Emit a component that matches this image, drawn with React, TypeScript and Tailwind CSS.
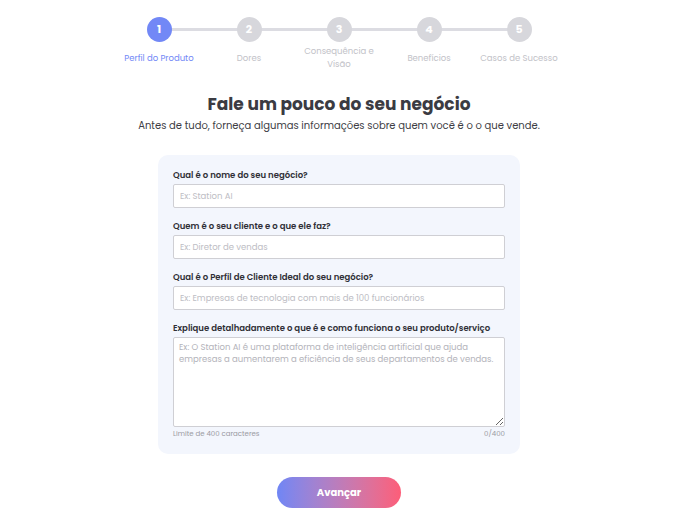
import { useState } from 'react';

const STEPS = [
  { n: 1, label: 'Perfil do Produto' },
  { n: 2, label: 'Dores' },
  { n: 3, label: 'Consequência e Visão' },
  { n: 4, label: 'Benefícios' },
  { n: 5, label: 'Casos de Sucesso' },
];

const font = { fontFamily: 'Poppins, "DejaVu Sans", Inter, sans-serif' };

function Stepper({ current }: { current: number }) {
  return (
    <div className="relative flex justify-center pt-[17px]">
      {/* connecting line */}
      <div className="absolute left-1/2 top-[28px] h-[3px] w-[360px] -translate-x-1/2 bg-[#dcdce2]" />
      {STEPS.map((s) => {
        const active = s.n === current;
        return (
          <div key={s.n} className="relative flex w-[90px] flex-col items-center">
            <div
              className={
                'flex h-[25px] w-[25px] items-center justify-center rounded-full text-[11px] font-bold text-white ' +
                (active ? 'bg-[#7288f6]' : 'bg-[#d7d7dc]')
              }
            >
              {s.n}
            </div>
            <div
              className={
                'mt-[2px] flex h-[28px] w-[84px] items-center justify-center text-center text-[8.5px] leading-[13px] ' +
                (active ? 'text-[#7288f6]' : 'text-[#c2c2c8]')
              }
            >
              {s.label}
            </div>
          </div>
        );
      })}
    </div>
  );
}

function Field({ label, placeholder }: { label: string; placeholder: string }) {
  const [value, setValue] = useState('');
  return (
    <div className="flex flex-col">
      <label className="mb-[3px] text-[8.5px] font-semibold leading-[12px] text-[#2f2f36]">{label}</label>
      <input
        value={value}
        onChange={(e) => setValue(e.target.value)}
        placeholder={placeholder}
        className="h-[24px] w-full rounded-[2px] border border-[#cfcfd4] bg-white px-[6px] text-[8.5px] text-[#333] outline-none placeholder:text-[#bdbdc4]"
      />
    </div>
  );
}

export default function App() {
  const [desc, setDesc] = useState('');

  return (
    <div className="min-h-[516px] w-full bg-white pr-[10px]" style={font}>
      <Stepper current={1} />

      <div className="mt-[20px] flex flex-col items-center">
        <h1 className="text-[17px] font-bold leading-[24px] text-[#3b3b42]">Fale um pouco do seu negócio</h1>
        <p className="mt-[3px] text-[10px] leading-[14px] text-[#3d3d44]">
          Antes de tudo, forneça algumas informações sobre quem você é o o que vende.
        </p>

        <div className="mt-[22px] flex w-[362px] flex-col gap-[12px] rounded-[10px] bg-[#f3f6fd] px-[15px] pb-[15px] pt-[14px]">
          <Field label="Qual é o nome do seu negócio?" placeholder="Ex: Station AI" />
          <Field label="Quem é o seu cliente e o que ele faz?" placeholder="Ex: Diretor de vendas" />
          <Field
            label="Qual é o Perfil de Cliente Ideal do seu negócio?"
            placeholder="Ex: Empresas de tecnologia com mais de 100 funcionários"
          />
          <div className="flex flex-col">
            <label className="mb-[3px] text-[8.5px] font-semibold leading-[12px] text-[#2f2f36]">
              Explique detalhadamente o que é e como funciona o seu produto/serviço
            </label>
            <textarea
              value={desc}
              maxLength={400}
              onChange={(e) => setDesc(e.target.value)}
              placeholder="Ex: O Station AI é uma plataforma de inteligência artificial que ajuda empresas a aumentarem a eficiência de seus departamentos de vendas."
              className="h-[90px] w-full rounded-[2px] border border-[#cfcfd4] bg-white px-[5px] py-[3px] text-[8.5px] leading-[12px] text-[#333] outline-none placeholder:text-[#b3b3ba]"
            />
            <div className="mt-[2px] flex justify-between text-[7px] leading-[10px] text-[#9a9aa2]">
              <span>Limite de 400 caracteres</span>
              <span>{desc.length}/400</span>
            </div>
          </div>
        </div>

        <button className="mt-[23px] h-[31px] w-[124px] rounded-full bg-gradient-to-r from-[#6f86f5] to-[#fd5d78] text-[10px] font-bold text-white">
          Avançar
        </button>
      </div>
    </div>
  );
}
